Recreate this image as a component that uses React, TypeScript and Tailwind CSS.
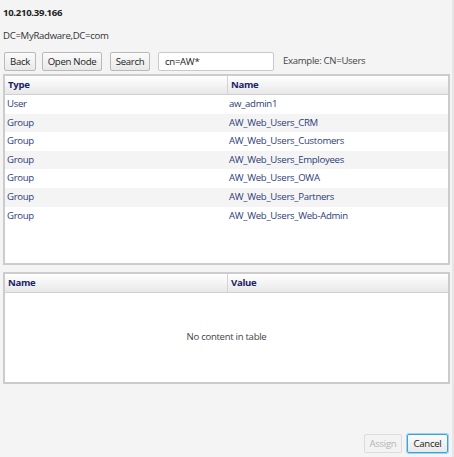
import React from 'react';

const rows = [
  { type: 'User', name: 'aw_admin1' },
  { type: 'Group', name: 'AW_Web_Users_CRM' },
  { type: 'Group', name: 'AW_Web_Users_Customers' },
  { type: 'Group', name: 'AW_Web_Users_Employees' },
  { type: 'Group', name: 'AW_Web_Users_OWA' },
  { type: 'Group', name: 'AW_Web_Users_Partners' },
  { type: 'Group', name: 'AW_Web_Users_Web-Admin' },
];

const btn =
  'h-[19px] px-[4px] whitespace-nowrap rounded-[2px] border border-[#b9b9b9] bg-gradient-to-b from-[#fbfbfb] to-[#e9e9e9] text-[#222] leading-none';

function Header({ a, b }: { a: string; b: string }) {
  return (
    <div className="flex h-[19px] bg-gradient-to-b from-white to-[#e8e8e8] border-b border-[#d0d0d0] font-bold text-[#1b2466]">
      <div className="w-[223px] pl-[3px] flex items-center border-r border-[#d4d4d4]">{a}</div>
      <div className="flex-1 pl-[3px] flex items-center">{b}</div>
    </div>
  );
}

export default function App() {
  return (
    <div
      className="w-[454px] h-[457px] bg-[#f4f4f4] text-[9.6px] tracking-[-0.3px] text-[#333] flex flex-col border-r-2 border-[#e6e6e6]"
      style={{ fontFamily: '"Open Sans", "Noto Sans", sans-serif' }}
    >
      <div className="pl-[3px] pt-[6px] h-[26px] font-bold text-[#222]">10.210.39.166</div>
      <div className="pl-[3px] h-[22px] pt-[3px]">DC=MyRadware,DC=com</div>

      <div className="flex items-center h-[27px] pl-[4px] gap-[6px]">
        <button className={btn + ' w-[32px]'}>Back</button>
        <button className={btn + ' w-[60px]'}>Open Node</button>
        <button className={btn + ' w-[40px] ml-[2px]'}>Search</button>
        <input
          readOnly
          value="cn=AW*"
          className="ml-[2px] w-[116px] h-[19px] px-[6px] bg-white border border-[#c9c9c9] rounded-[2px] text-[9.6px] tracking-[-0.3px] text-[#222] outline-none"
        />
        <span className="ml-[3px] text-[#444]">Example: CN=Users</span>
      </div>

      <div className="mt-[-1px] mx-[3px] w-[447px] h-[191px] border-2 border-[#cccccc] bg-white flex flex-col">
        <Header a="Type" b="Name" />
        <div className="flex flex-col text-[#2e3b78]">
          {rows.map((r, i) => (
            <div key={i} className={'flex h-[18.6px] items-center ' + (i % 2 === 1 ? 'bg-[#f4f4f4]' : 'bg-white')}>
              <div className="w-[224px] pl-[2px]">{r.type}</div>
              <div className="flex-1 pl-[0px]">{r.name}</div>
            </div>
          ))}
        </div>
      </div>

      <div className="mt-[7px] mx-[3px] w-[447px] h-[112px] border-2 border-[#cccccc] bg-white flex flex-col">
        <Header a="Name" b="Value" />
        <div className="flex-1 flex items-center justify-center text-[#444] pb-[1px]">No content in table</div>
      </div>

      <div className="flex-1 flex items-end justify-end gap-[5px] pr-[4px] pb-[4px]">
        <button className="h-[19px] w-[38px] rounded-[2px] border border-[#dcdcdc] bg-[#f3f3f3] text-[#b5b5b5] leading-none">
          Assign
        </button>
        <button className="h-[19px] w-[41px] rounded-[2px] border border-[#3aa3dc] ring-1 ring-[#9fd3ef] bg-gradient-to-b from-[#fbfbfb] to-[#e9e9e9] text-[#222] leading-none">
          Cancel
        </button>
      </div>
    </div>
  );
}
